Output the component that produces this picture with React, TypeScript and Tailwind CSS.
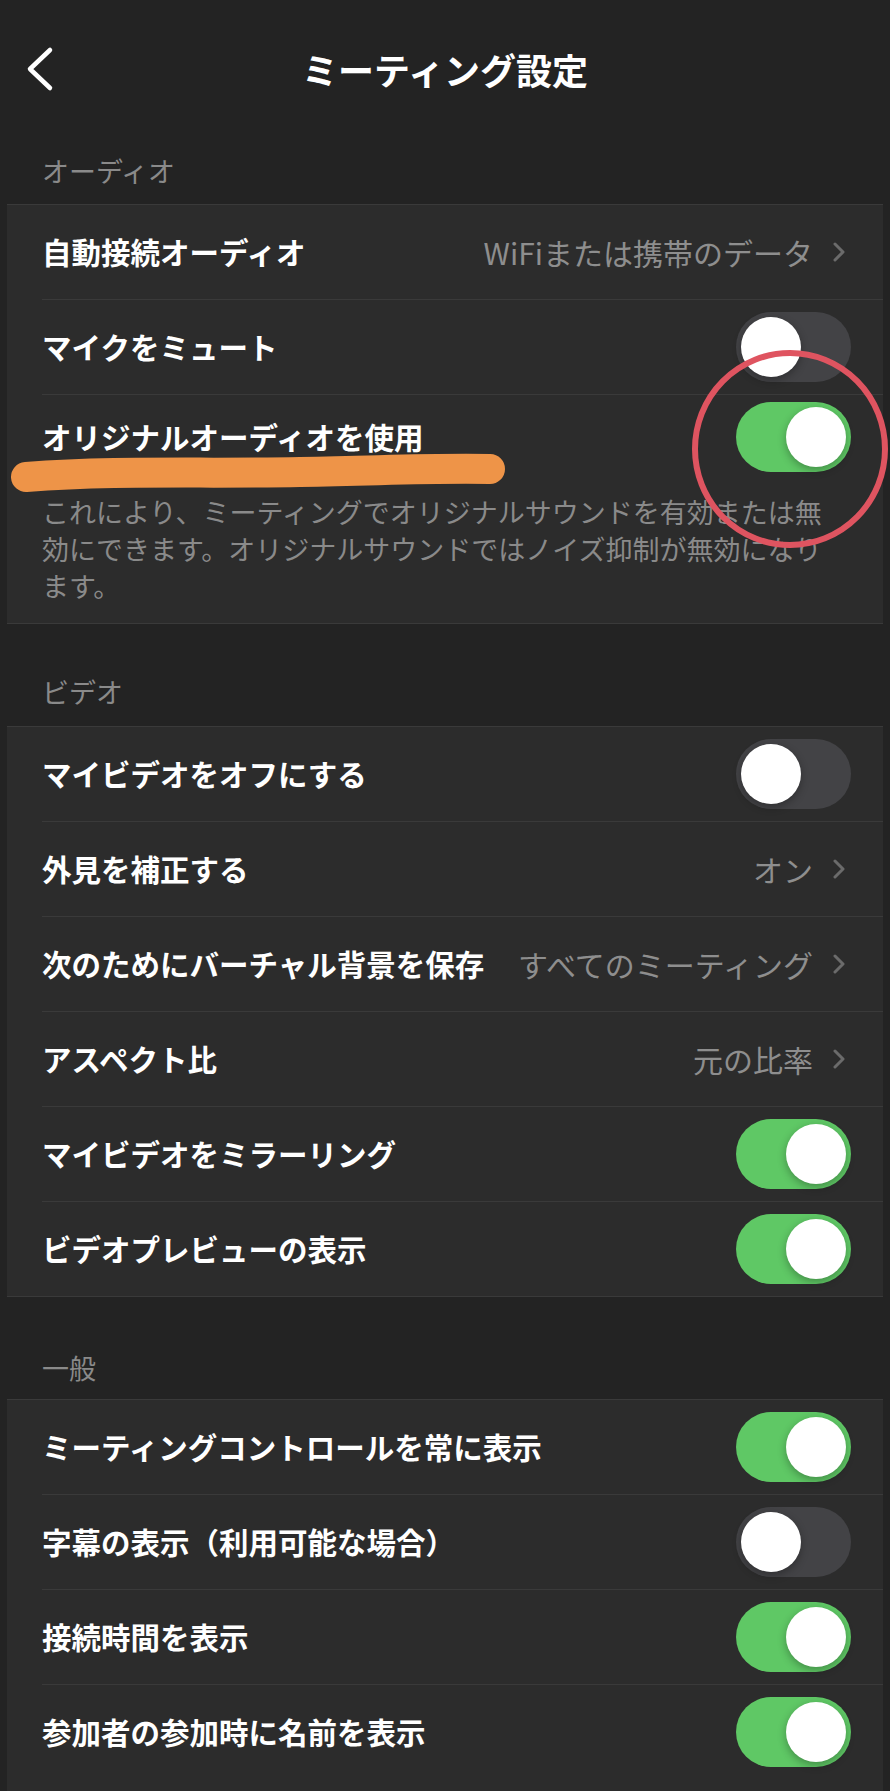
import React from "react";

function Toggle({ on }: { on: boolean }) {
  return (
    <div
      className={
        on
          ? "w-[115px] h-[70px] rounded-full p-[5px] flex justify-end shrink-0 bg-[#5fc865]"
          : "w-[115px] h-[70px] rounded-full p-[5px] flex justify-start shrink-0 bg-[#434346]"
      }
    >
      <div className="w-[60px] h-[60px] rounded-full bg-white shadow-[0_3px_8px_rgba(0,0,0,0.3)]" />
    </div>
  );
}

function Chevron() {
  return (
    <svg width="14" height="20" viewBox="0 0 14 20" className="shrink-0">
      <path d="M3 2 L11 10 L3 18" fill="none" stroke="#6b6b6b" strokeWidth="3" strokeLinecap="round" strokeLinejoin="round" />
    </svg>
  );
}

type RowProps = { label: string; value?: string; toggle?: boolean; first?: boolean };

function Row({ label, value, toggle, first }: RowProps) {
  return (
    <div className="pl-[35px]">
      <div
        className={
          first
            ? "h-[94px] flex items-center justify-between pr-[32px]"
            : "h-[95px] flex items-center justify-between pr-[32px] border-t border-[#3a3a3a]"
        }
      >
        <span className="text-[29.5px] font-bold text-white leading-none whitespace-nowrap">{label}</span>
        {value !== undefined ? (
          <div className="flex items-center gap-[19px] mr-[5px]">
            <span className="text-[30px] text-[#8e8e8e] leading-none whitespace-nowrap">{value}</span>
            <Chevron />
          </div>
        ) : (
          <Toggle on={!!toggle} />
        )}
      </div>
    </div>
  );
}

function SectionHeader({ title, h, pb }: { title: string; h: string; pb: string }) {
  return (
    <div className={`${h} ${pb} flex items-end pl-[42px]`}>
      <span className="text-[27px] leading-[30px] text-[#8a8a8a]">{title}</span>
    </div>
  );
}

export default function App() {
  return (
    <div className="relative w-[890px] h-[1791px] overflow-hidden bg-[#232323] font-['Noto_Sans_CJK_JP','Noto_Sans',sans-serif]">
      {/* Nav bar */}
      <div className="h-[138px] grid grid-cols-[1fr_auto_1fr] items-center">
        <div className="pl-[25px] flex items-center">
          <svg width="30" height="46" viewBox="0 0 30 46">
            <path d="M25 4 L5 23 L25 42" fill="none" stroke="#ffffff" strokeWidth="4.5" strokeLinecap="round" strokeLinejoin="round" />
          </svg>
        </div>
        <h1 className="text-[36px] font-bold text-white leading-none">ミーティング設定</h1>
        <div />
      </div>

      <SectionHeader title="オーディオ" h="h-[66px]" pb="pb-[18px]" />
      <div className="mx-[7px] bg-[#2c2c2c] border-y border-[#3a3a3a]">
        <Row first label="自動接続オーディオ" value="WiFiまたは携帯のデータ" />
        <Row label="マイクをミュート" toggle={false} />
        <div className="pl-[35px]">
          <div className="border-t border-[#3a3a3a] pr-[32px] pb-[19px]">
            <div className="h-[84px] flex items-center justify-between">
              <span className="text-[29.5px] font-bold text-white leading-none whitespace-nowrap">オリジナルオーディオを使用</span>
              <Toggle on={true} />
            </div>
            <p className="mt-[14px] text-[27px] leading-[37px] text-[#8a8a8a] whitespace-nowrap">
              これにより、ミーティングでオリジナルサウンドを有効または無
              <br />
              効にできます。オリジナルサウンドではノイズ抑制が無効になり
              <br />
              ます。
            </p>
          </div>
        </div>
      </div>

      <SectionHeader title="ビデオ" h="h-[102px]" pb="pb-[19px]" />
      <div className="mx-[7px] bg-[#2c2c2c] border-y border-[#3a3a3a]">
        <Row first label="マイビデオをオフにする" toggle={false} />
        <Row label="外見を補正する" value="オン" />
        <Row label="次のためにバーチャル背景を保存" value="すべてのミーティング" />
        <Row label="アスペクト比" value="元の比率" />
        <Row label="マイビデオをミラーリング" toggle={true} />
        <Row label="ビデオプレビューの表示" toggle={true} />
      </div>

      <SectionHeader title="一般" h="h-[102px]" pb="pb-[16px]" />
      <div className="mx-[7px] bg-[#2c2c2c] border-t border-[#3a3a3a] pb-[20px]">
        <Row first label="ミーティングコントロールを常に表示" toggle={true} />
        <Row label="字幕の表示（利用可能な場合）" toggle={false} />
        <Row label="接続時間を表示" toggle={true} />
        <Row label="参加者の参加時に名前を表示" toggle={true} />
      </div>

      {/* Hand-drawn annotations */}
      <svg
        className="absolute top-0 left-0 pointer-events-none"
        width="890"
        height="1791"
        viewBox="0 0 890 1791"
      >
        <path
          d="M26 477 C 120 470, 200 474, 300 472 S 430 468, 490 469"
          fill="none"
          stroke="#ee9448"
          strokeWidth="30"
          strokeLinecap="round"
        />
        <ellipse cx="790" cy="449" rx="95" ry="96" fill="none" stroke="#df5460" strokeWidth="6" />
      </svg>
    </div>
  );
}
